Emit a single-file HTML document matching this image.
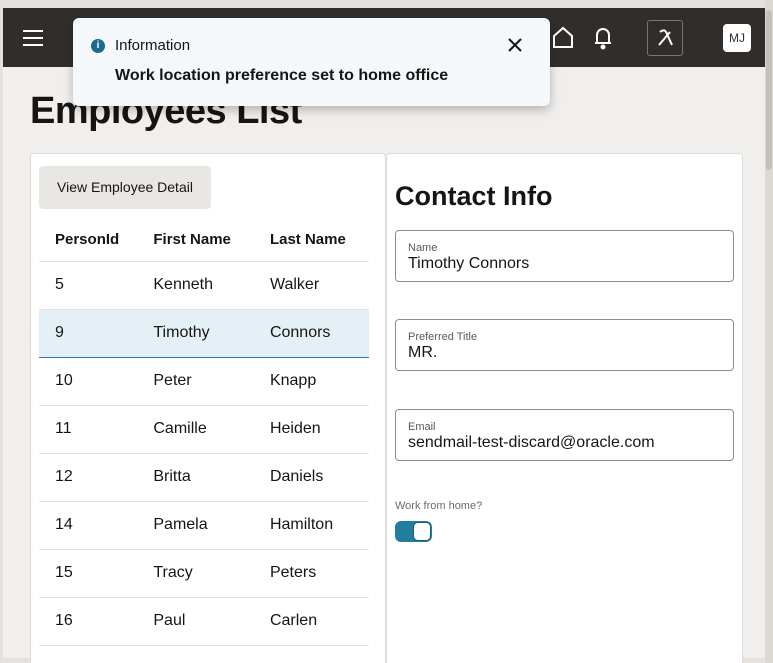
<!DOCTYPE html>
<html><head><style>
*{box-sizing:border-box;margin:0;padding:0}
html,body{width:773px;height:663px;overflow:hidden}
body{background:#e4e1dd;font-family:"Liberation Sans",sans-serif;position:relative}
.page{position:absolute;left:3px;top:8px;width:762px;height:650px;background:#f1efed}
.hdr{position:absolute;left:0;top:0;width:762px;height:59px;background:#312d2a}
.sb{position:absolute;left:765px;top:0;width:8px;height:663px;background:#dcd9d5}
.sb i{position:absolute;left:1px;top:10px;width:6px;height:160px;background:#c4c1bd;border-radius:3px}
.ham{position:absolute;left:20px;top:22px;width:20px}
.ham b{display:block;height:2px;background:#fff;margin-bottom:5px}
h1{position:absolute;left:27px;top:82px;font-size:38px;font-weight:bold;color:#161513;letter-spacing:-0.5px}
.card{position:absolute;top:153px;background:#fff;border:1px solid #e0ddd9;border-radius:4px}
.btn{position:absolute;left:8px;top:12px;width:172px;height:43px;background:#e9e7e4;border-radius:4px;font-size:14px;color:#161513;line-height:43px;text-align:center}
table{position:absolute;left:8px;top:65px;width:330px;border-collapse:collapse;font-size:16px;color:#161513}
td,th{height:48px;text-align:left;padding-left:16px;border-bottom:1px solid #e5e3e0;font-weight:normal}
td:nth-child(2),th:nth-child(2){padding-left:14px}
th{font-weight:bold;font-size:15px;height:42px}
tr.sel td{background:#e4f0f5;border-top:1px solid #227e9e;border-bottom:1px solid #227e9e}
h2{position:absolute;left:8px;top:27px;font-size:27px;font-weight:bold;color:#161513}
.fld{position:absolute;left:8px;width:339px;height:52px;border:1px solid #8f8b88;border-radius:4px;padding:11px 12px}
.fld small{display:block;font-size:11px;color:#5d5955;line-height:12px}
.fld span{display:block;font-size:16px;color:#161513;line-height:20px}
.toast{position:absolute;left:73px;top:18px;width:477px;height:88px;background:#f5f8fa;border-radius:6px;box-shadow:0 4px 10px rgba(0,0,0,.25)}
</style></head><body>
<div class="page">
<div class="hdr">
<div class="ham"><b></b><b></b><b></b></div>
<svg style="position:absolute;left:548px;top:17px" width="24" height="24" viewBox="0 0 24 24" fill="none" stroke="#fff" stroke-width="2"><path d="M3 11 L12 3 L21 11 V22 H3Z"/></svg>
<svg style="position:absolute;left:589px;top:17px" width="22" height="26" viewBox="0 0 22 26" fill="none" stroke="#fff" stroke-width="2"><path d="M5 18 V10 a6 6 0 0 1 12 0 V18 H3 H19"/><circle cx="11" cy="22" r="1.5" fill="#fff"/></svg>
<div style="position:absolute;left:644px;top:12px;width:36px;height:36px;border:1px solid #7a7571;border-radius:3px"></div>
<svg style="position:absolute;left:650px;top:18px" width="24" height="24" viewBox="0 0 24 24" fill="none" stroke="#fff" stroke-width="2"><path d="M7 6 Q12 2 14 8 L19 19 M6 19 L17 6"/></svg>
<div style="position:absolute;left:720px;top:16px;width:28px;height:28px;background:#fff;border-radius:4px;font-size:12px;line-height:28px;text-align:center;color:#312d2a">MJ</div>
</div>
<h1>Employees List</h1>
</div>
<div class="sb"><i></i></div>
<div class="card" style="left:30px;width:356px;height:520px">
<div class="btn">View Employee Detail</div>
<table>
<tr><th>PersonId</th><th>First Name</th><th>Last Name</th></tr>
<tr><td>5</td><td>Kenneth</td><td>Walker</td></tr>
<tr class="sel"><td>9</td><td>Timothy</td><td>Connors</td></tr>
<tr><td>10</td><td>Peter</td><td>Knapp</td></tr>
<tr><td>11</td><td>Camille</td><td>Heiden</td></tr>
<tr><td>12</td><td>Britta</td><td>Daniels</td></tr>
<tr><td>14</td><td>Pamela</td><td>Hamilton</td></tr>
<tr><td>15</td><td>Tracy</td><td>Peters</td></tr>
<tr><td>16</td><td>Paul</td><td>Carlen</td></tr>
</table>
</div>
<div class="card" style="left:386px;width:357px;height:520px">
<h2>Contact Info</h2>
<div class="fld" style="top:76px"><small>Name</small><span>Timothy Connors</span></div>
<div class="fld" style="top:165px"><small>Preferred Title</small><span>MR.</span></div>
<div class="fld" style="top:255px"><small>Email</small><span>sendmail-test-discard@oracle.com</span></div>
<div style="position:absolute;left:8px;top:346px;font-size:11px;color:#6f6b67">Work from home?</div>
<div style="position:absolute;left:8px;top:367px;width:37px;height:21px;background:#227e9e;border-radius:6px"><div style="position:absolute;right:1px;top:1px;width:18px;height:19px;background:#fff;border:1px solid #1a5f78;border-radius:5px"></div></div>
</div>
<div class="toast">
<div style="position:absolute;left:18px;top:21px;width:14px;height:14px;border-radius:50%;background:#1c6a8c;color:#fff;font-size:10px;font-weight:bold;text-align:center;line-height:14px">i</div>
<div style="position:absolute;left:42px;top:19px;font-size:15px;color:#161513">Information</div>
<div style="position:absolute;left:42px;top:49px;font-size:16px;font-weight:bold;color:#161513">Work location preference set to home office</div>
<svg style="position:absolute;left:435px;top:20px" width="14" height="14" viewBox="0 0 14 14" stroke="#161513" stroke-width="2"><path d="M1 1L13 13M13 1L1 13"/></svg>
</div>
</body></html>
